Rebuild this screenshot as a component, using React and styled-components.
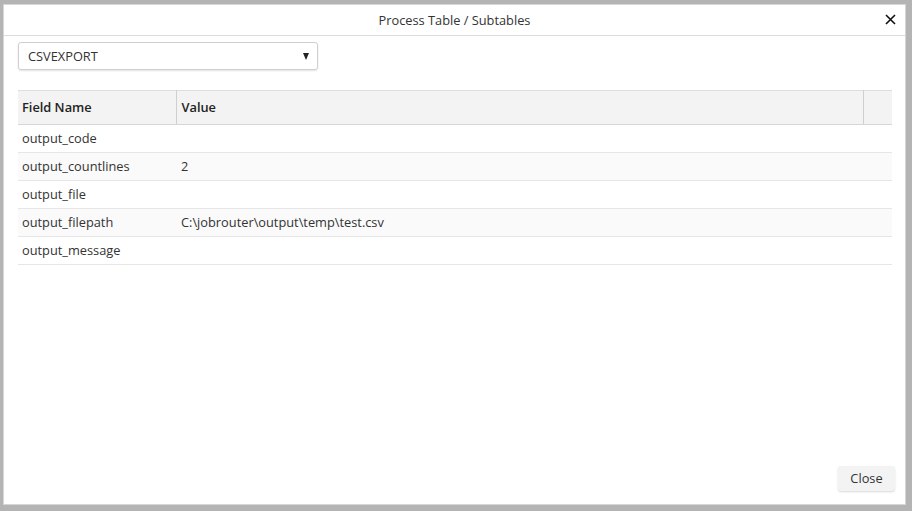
import React from 'react';
import styled, { createGlobalStyle } from 'styled-components';

const GlobalStyle = createGlobalStyle`
  html, body {
    margin: 0;
    padding: 0;
    background: #b4b4b4;
    font-family: "Open Sans", "Liberation Sans", sans-serif;
    font-size: 13px;
    color: #333;
  }
`;

const rows = [
  { name: 'output_code', value: '' },
  { name: 'output_countlines', value: '2' },
  { name: 'output_file', value: '' },
  { name: 'output_filepath', value: 'C:\\jobrouter\\output\\temp\\test.csv' },
  { name: 'output_message', value: '' },
];

const App = () => {
  return (
    <>
      <GlobalStyle />
      <Backdrop>
        <Dialog>
          <Header>
            <Title>Process Table / Subtables</Title>
            <CloseIcon aria-label="close">
              <svg width="11" height="11" viewBox="0 0 11 11">
                <path d="M1 1 L10 10 M10 1 L1 10" stroke="#111" strokeWidth="1.6" fill="none" />
              </svg>
            </CloseIcon>
          </Header>
          <Body>
            <Select>
              <span>CSVEXPORT</span>
              <Caret />
            </Select>
            <Table>
              <thead>
                <tr>
                  <HeadCell $w={158}>Field Name</HeadCell>
                  <HeadCell $pl={5}>Value</HeadCell>
                  <HeadCell $w={29} />
                </tr>
              </thead>
              <tbody>
                {rows.map((r, i) => (
                  <Row key={r.name} $odd={i % 2 === 1}>
                    <Cell>{r.name}</Cell>
                    <Cell colSpan={2} $pl={5}>{r.value}</Cell>
                  </Row>
                ))}
              </tbody>
            </Table>
          </Body>
          <Footer>
            <Button>Close</Button>
          </Footer>
        </Dialog>
      </Backdrop>
    </>
  );
};

const Backdrop = styled.div`
  width: 912px;
  height: 511px;
  padding: 5px 7px 7px 4px;
  box-sizing: border-box;
`;

const Dialog = styled.div`
  background: #fff;
  width: 901px;
  height: 499px;
  display: flex;
  flex-direction: column;
  box-shadow: 0 0 0 1px #d6d6d6;
`;

const Header = styled.div`
  height: 30px;
  border-bottom: 1px solid #dcdcdc;
  display: flex;
  align-items: center;
  justify-content: center;
  position: relative;
  flex-shrink: 0;
`;

const Title = styled.div`
  font-size: 12.8px;
  color: #333;
`;

const CloseIcon = styled.div`
  position: absolute;
  right: 9px;
  top: 9px;
  display: flex;
`;

const Body = styled.div`
  flex: 1;
  padding: 6px 13px 0 14px;
`;

const Select = styled.div`
  width: 300px;
  height: 28px;
  box-sizing: border-box;
  border: 1px solid #cfcfcf;
  border-radius: 3px;
  box-shadow: 0 1px 2px rgba(0, 0, 0, 0.12);
  display: flex;
  align-items: center;
  justify-content: space-between;
  padding: 0 8px 0 9px;
  font-size: 12.8px;
  color: #333;
`;

const Caret = styled.span`
  width: 0;
  height: 0;
  border-left: 3.5px solid transparent;
  border-right: 3.5px solid transparent;
  border-top: 7px solid #222;
`;

const Table = styled.table`
  margin-top: 20px;
  width: 874px;
  border-collapse: collapse;
  table-layout: fixed;
`;

const HeadCell = styled.th`
  width: ${(p) => (p.$w ? `${p.$w}px` : 'auto')};
  height: 34px;
  box-sizing: border-box;
  background: #f3f3f3;
  border-top: 1px solid #dedede;
  border-bottom: 1px solid #d6d6d6;
  border-right: 1px solid #cfcfcf;
  text-align: left;
  font-weight: 600;
  font-size: 12.8px;
  color: #222;
  padding: 0 4px 1px ${(p) => p.$pl || 4}px;

  &:last-child {
    border-right: none;
  }
`;

const Row = styled.tr`
  background: ${(p) => (p.$odd ? '#fafafa' : '#fff')};
  border-bottom: 1px solid #e6e6e6;
`;

const Cell = styled.td`
  height: 26px;
  padding: 0 4px 1px ${(p) => p.$pl || 4}px;
  font-size: 12.8px;
  color: #333;
`;

const Footer = styled.div`
  display: flex;
  justify-content: flex-end;
  padding: 0 10px 13px 0;
`;

const Button = styled.button`
  width: 57px;
  height: 25px;
  border: none;
  border-radius: 3px;
  background: #f3f3f3;
  box-shadow: 0 1px 2px rgba(0, 0, 0, 0.15);
  font-family: "Open Sans", "Liberation Sans", sans-serif;
  font-size: 12.8px;
  color: #333;
  padding: 0 0 2px;
`;

export default App;
